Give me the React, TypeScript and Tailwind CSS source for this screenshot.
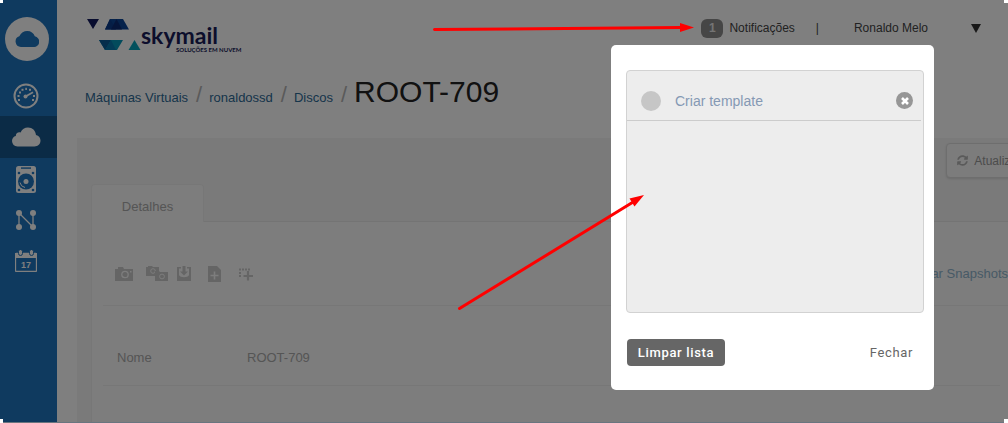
import type { ReactNode } from "react";
import clsx from "clsx";
import { FaSyncAlt } from "react-icons/fa";

function Cloud({ className }: { className: string }) {
  return (
    <svg viewBox="0 0 30 20" className={className} fill="currentColor">
      <path d="M6.500 19.500A6 6 0 0 1 1 14c0-2.900 1.600-4.600 3.800-5.100C4.700 6.300 7 4.700 9.600 5.400 11 2.300 13.700.5 17 .5c4.400 0 7.600 3 8 7.500 2.900.7 4.500 2.800 4.500 5.600 0 3.500-2.500 5.900-6 5.900z" />
    </svg>
  );
}

function RoundCloud() {
  return (
    <svg viewBox="0 0 24 16" className="h-4 w-6" fill="currentColor">
      <path d="M6 16a5.500 5.500 0 0 1-1.700-10.700C6 1.800 9 0 12.200 0c3.700 0 6.400 2 7.600 5.300A5.400 5.400 0 0 1 18.500 16z" />
    </svg>
  );
}

function Gauge() {
  return (
    <svg viewBox="0 0 26 26" className="size-[26px]" fill="none" stroke="currentColor">
      <circle cx="13" cy="13" r="11.500" strokeWidth="2" />
      <g fill="currentColor" stroke="none">
        <rect x="5" y="16" width="2" height="2" />
        <rect x="4.500" y="12" width="2" height="2" />
        <rect x="6" y="8.500" width="2" height="2" />
        <rect x="8.500" y="5.800" width="2" height="2" />
        <rect x="12.300" y="4.800" width="1.600" height="2.200" />
        <rect x="16" y="5.800" width="2" height="2" />
        <rect x="20" y="12" width="2" height="2" />
        <rect x="19" y="16" width="2" height="2" />
        <circle cx="12.500" cy="13.500" r="2" />
      </g>
      <path d="m12.500 13.500 7.500-4.200" strokeWidth="1.800" />
    </svg>
  );
}

function Disk() {
  return (
    <svg viewBox="0 0 20 28" className="h-7 w-5">
      <rect y="1" width="20" height="27" rx="2.500" fill="currentColor" />
      <g fill="#1e74be">
        <rect x="5" y="2.200" width="10" height="1.800" opacity="0.800" />
        <circle cx="3" cy="8" r="1.300" />
        <circle cx="17" cy="8" r="1.300" />
        <circle cx="3" cy="25" r="1.300" />
        <circle cx="17" cy="25" r="1.300" />
        <circle cx="10" cy="16.500" r="8" />
      </g>
      <circle cx="10" cy="16.500" r="2.500" fill="currentColor" />
      <path d="M4 17.500a6.200 6.200 0 0 0 5 5" fill="none" stroke="currentColor" />
    </svg>
  );
}

function Network() {
  return (
    <svg viewBox="0 0 20 20" className="size-5" fill="currentColor" stroke="currentColor">
      <path d="M3 3v14M17 3v14M3 3l14 14" fill="none" strokeWidth="1.300" />
      <g stroke="none">
        <circle cx="3" cy="3" r="3" />
        <circle cx="17" cy="3" r="3" />
        <circle cx="3" cy="17" r="3" />
        <circle cx="17" cy="17" r="3" />
      </g>
    </svg>
  );
}

function Calendar() {
  return (
    <svg viewBox="0 0 22 22" className="size-[22px]">
      <rect x="0.500" y="3.500" width="21" height="18" rx="1" fill="none" stroke="currentColor" strokeWidth="1.300" />
      <path d="M0 3h22v5H0z" fill="currentColor" />
      <g fill="currentColor" stroke="#1e74be">
        <rect x="3.500" y="-0.500" width="4" height="6" rx="2" />
        <rect x="14.500" y="-0.500" width="4" height="6" rx="2" />
      </g>
      <text x="11" y="18" textAnchor="middle" fill="currentColor" className="font-['Liberation_Sans'] text-[9px] font-bold">
        17
      </text>
    </svg>
  );
}

function Logo() {
  return (
    <svg viewBox="0 0 156 40" className="h-10 w-[156px]" role="img" aria-label="skymail">
      <path d="M0 3h12L6 13z" fill="#121a5e" />
      <path d="M23 3h13l6 10.500H18z" fill="#0a4496" />
      <path d="m23 3 6 10.500H18z" fill="#0a3a8a" />
      <path d="m29.500 3-5.500 10.500h11z" fill="#0b2a74" />
      <path d="M12 24h24l-6 10H18z" fill="#0797b8" />
      <path d="M12 24h12l-6 10z" fill="#0b5c98" />
      <path d="m24 24 5 10H18z" fill="#0879ae" />
      <path d="m47.500 24 6 10h-12z" fill="#05a3ba" />
      <text x="54" y="28" fill="#181c58" className="font-[Lato] text-[23px] font-bold">
        skymail
      </text>
      <text x="89" y="36" fill="#181c58" className="font-[Lato] text-[6px] font-bold">
        SOLUÇÕES EM NUVEM
      </text>
    </svg>
  );
}

function Camera() {
  return (
    <svg viewBox="0 0 18 14" className="h-3.5 w-[18px]">
      <path d="M0 2h3V0h5l1 2h9v12H0z" fill="currentColor" />
      <circle cx="10" cy="7.500" r="3.200" fill="none" stroke="#fafafa" strokeWidth="1.300" />
      <path d="M15 4h1.500v1.500H15z" fill="#fafafa" />
    </svg>
  );
}

function Cameras() {
  return (
    <svg viewBox="0 0 22 15" className="h-[15px] w-[22px]">
      <path d="M0 1h2V0h4l1 1h6v9H0z" fill="currentColor" />
      <circle cx="7" cy="5" r="2.300" fill="none" stroke="#fafafa" />
      <path d="M9 5h4l1 1h8v9H9z" fill="currentColor" />
      <circle cx="16" cy="10.500" r="2.400" fill="none" stroke="#fafafa" />
    </svg>
  );
}

function Download() {
  return (
    <svg viewBox="0 0 14 15" className="h-[15px] w-3.5" fill="currentColor">
      <path d="M0 1h4v1.500H2V9c1 3 9 3 10 0V2.500h-2V1h4v14H0z" />
      <path d="M5.500 0h3v5.500H11L7 9.500 3 5.500h2.500z" />
    </svg>
  );
}

function NewFile() {
  return (
    <svg viewBox="0 0 13 16" className="h-4 w-[13px]">
      <path d="M0 0h9l4 4v12H0z" fill="currentColor" />
      <path d="M6.500 5.500v8m-4-4h8" stroke="#fafafa" strokeWidth="1.600" />
    </svg>
  );
}

function NewSelection() {
  return (
    <svg viewBox="0 0 14 14" className="size-3.5" stroke="currentColor" fill="none">
      <path d="M0 2.500h11M1 5v6" strokeWidth="2" strokeDasharray="2 1" />
      <path d="M9 4v9.500M4.500 9H14" strokeWidth="2.200" />
    </svg>
  );
}

const menu: { label: string; icon: ReactNode; active?: boolean }[] = [
  { label: "Painel", icon: <Gauge /> },
  { label: "Máquinas Virtuais", icon: <Cloud className="h-5 w-[30px]" />, active: true },
  { label: "Discos", icon: <Disk /> },
  { label: "Redes", icon: <Network /> },
  { label: "Eventos", icon: <Calendar /> },
];

const tools = [
  { label: "Criar snapshot", icon: <Camera /> },
  { label: "Snapshots recorrentes", icon: <Cameras /> },
  { label: "Baixar volume", icon: <Download /> },
  { label: "Criar template", icon: <NewFile /> },
  { label: "Redimensionar", icon: <NewSelection /> },
];

const crumbs = ["Máquinas Virtuais", "ronaldossd", "Discos"];

function Sidebar() {
  return (
    <nav className="flex w-[57px] shrink-0 flex-col bg-[#1e74be] pt-[17px] text-white">
      <a href="#" aria-label="Início" className="mb-3.5 ml-[5px] flex size-11 items-center justify-center rounded-full bg-white text-[#1e74be]">
        <RoundCloud />
      </a>
      {menu.map((item) => (
        <a
          key={item.label}
          href="#"
          aria-label={item.label}
          className={clsx("flex items-center justify-center pr-1.5", item.active ? "h-[42px] bg-[#16568c]" : "h-[41px]")}
        >
          {item.icon}
        </a>
      ))}
    </nav>
  );
}

function Header() {
  return (
    <header className="flex h-[60px] shrink-0 items-start justify-between pt-4 pr-[27px] pl-[30px]">
      <Logo />
      <div className="flex h-6 items-center text-xs text-[#444]">
        <button type="button" className="flex items-center gap-1.5">
          <span className="flex h-[19px] w-[22px] items-center justify-center rounded-md bg-[#8c8c8c] font-bold text-[#e8e8e8]">1</span>
          Notificações
        </button>
        <span className="ml-[21px]">|</span>
        <button type="button" className="ml-[35px] flex items-center gap-[43px]">
          Ronaldo Melo
          <svg viewBox="0 0 10 9" className="h-[9px] w-2.5" fill="#333">
            <path d="M0 0h10L5 9z" />
          </svg>
        </button>
      </div>
    </header>
  );
}

function Details() {
  return (
    <section className="ml-5 flex flex-1 flex-col bg-[#f5f5f5] pt-[5px] pl-3.5">
      <div className="flex justify-end">
        <button type="button" className="-mr-6 flex h-[35px] items-center gap-1.5 rounded border border-[#dcdcdc] bg-[#f8f8f8] px-2.5 text-xs whitespace-nowrap text-[#999] shadow-sm">
          <FaSyncAlt className="size-[11px] text-[#b4b4b4]" />
          Atualizar
        </button>
      </div>
      <div className="mt-1.5 flex h-[38px] shrink-0">
        <button type="button" className="w-[113px] rounded-t border border-b-0 border-[#eee] bg-[#fafafa] pt-1.5 text-[13px] text-[#aaa]">
          Detalhes
        </button>
        <div className="flex-1 border-b border-[#e8e8e8]" />
      </div>
      <div className="flex-1 border-l border-[#eee] bg-[#fafafa] pl-[11px]">
        <div className="flex h-[84px] items-center justify-between border-b border-[#eee] pt-5 pl-3">
          <div className="flex items-center text-[#cacaca]">
            {tools.map((tool) => (
              <button key={tool.label} type="button" aria-label={tool.label} className="w-[31px]">
                {tool.icon}
              </button>
            ))}
          </div>
          <a href="#" className="text-[13px] text-[#8fb4cd]">
            Criar Snapshots
          </a>
        </div>
        <dl className="text-[13px] text-[#aaa]">
          <div className="mr-2 flex h-20 items-center border-b border-[#eee] pt-6 pl-3.5">
            <dt className="w-[130px]">Nome</dt>
            <dd>ROOT-709</dd>
          </div>
          <div className="flex pt-8 pl-3.5">
            <dt>ID</dt>
          </div>
        </dl>
      </div>
    </section>
  );
}

function Notifications() {
  return (
    <div role="dialog" aria-label="Notificações" className="absolute top-[45px] right-[74px] w-[323px] rounded-[5px] bg-white px-[15px] pt-[25px] pb-6">
      <ul className="h-[243px] w-[298px] rounded border border-[#d2d2d2] bg-[#ededed] pr-0.5">
        <li className="flex h-[50px] items-center border-b border-[#ccc] pt-2.5 pr-2 pl-3.5">
          <span className="size-5 rounded-full bg-[#c6c6c6]" />
          <span className="ml-3.5 flex-1 text-sm text-[#8599b4]">Criar template</span>
          <button type="button" aria-label="Remover" className="flex size-[17px] items-center justify-center rounded-full bg-[#969696]">
            <svg viewBox="0 0 8 8" className="size-2" stroke="#fff" strokeWidth="2.600">
              <path d="m1 1 6 6M7 1 1 7" />
            </svg>
          </button>
        </li>
      </ul>
      <div className="mt-[26px] flex items-center justify-between font-[Roboto] text-[13px] tracking-wider">
        <button type="button" className="ml-px h-[27px] w-[98px] rounded bg-[#666] font-medium text-white">
          Limpar lista
        </button>
        <button type="button" className="mr-1.5 text-[#666]">
          Fechar
        </button>
      </div>
    </div>
  );
}

function Arrows() {
  return (
    <svg className="pointer-events-none absolute inset-0 size-full" fill="#f00" stroke="#f00">
      <path d="M434.500 29.500 682 27.500" strokeWidth="3" strokeLinecap="round" />
      <path d="M694 27.500 680 32v-9z" stroke="none" />
      <path d="M459.500 308.500 634 201.500" strokeWidth="3" strokeLinecap="round" />
      <path d="m644 195-9.500 11.500-5-8z" stroke="none" />
    </svg>
  );
}

export default function App() {
  return (
    <div className="relative flex h-screen overflow-hidden bg-white font-['Liberation_Sans',Arial,sans-serif]">
      <Sidebar />
      <main className="flex min-w-0 flex-1 flex-col">
        <Header />
        <div className="flex h-[78px] shrink-0 items-start pt-3.5 pl-7">
          <nav className="flex items-baseline text-[13px] text-[#2d6a96]">
            {crumbs.map((crumb) => (
              <span key={crumb} className="flex items-baseline">
                <a href="#">{crumb}</a>
                <span className="mr-[7px] ml-2 text-[22px] leading-8 text-[#b4b4b4]">/</span>
              </span>
            ))}
            <h1 className="text-[30px] leading-9 text-[#222]">ROOT-709</h1>
          </nav>
        </div>
        <Details />
      </main>
      <div className="absolute inset-0 bg-black/50" />
      <Notifications />
      <Arrows />
      <div className="absolute inset-x-0 bottom-0 h-px bg-[#69757f]" />
      <div className="pointer-events-none absolute inset-0 flex flex-wrap content-between justify-between">
        <i className="h-[3px] w-[calc(100%-4px)] border-l-[3px] border-white" />
        <i className="h-[3px] w-1 bg-white" />
        <i className="h-1 w-[calc(100%-4px)] border-l-[3px] border-white" />
        <i className="h-1 w-1 bg-white" />
      </div>
    </div>
  );
}
